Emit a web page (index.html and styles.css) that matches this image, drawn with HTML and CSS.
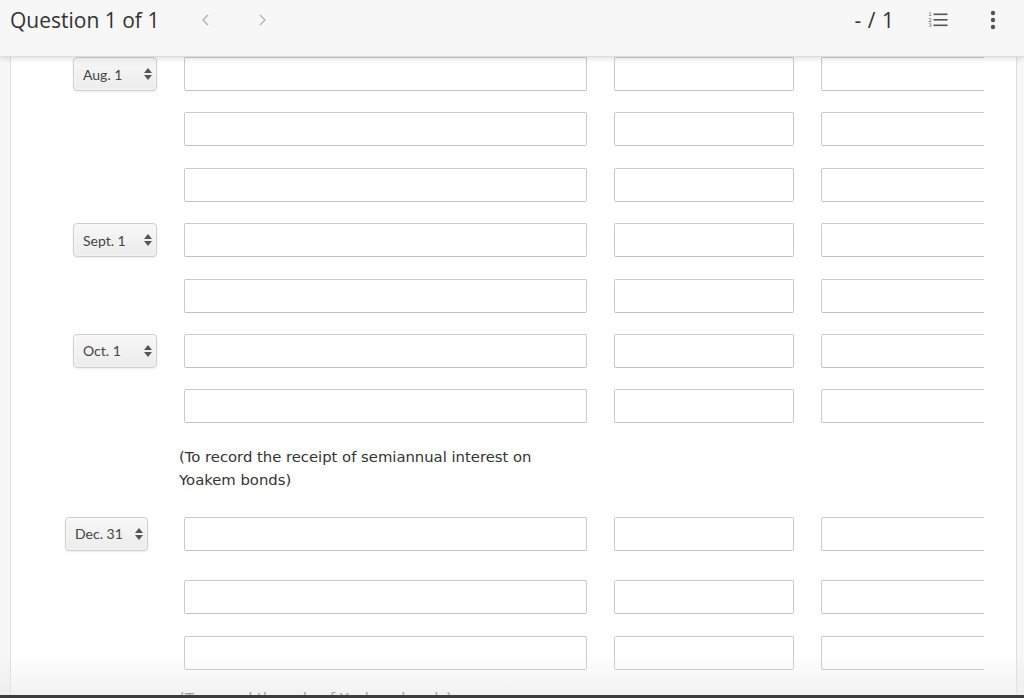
FILE: index.html
```html
<!DOCTYPE html>
<html>
<head>
    <title>Question 1 of 1</title>
    <link rel="stylesheet" href="styles.css">
</head>
<body>
    <header class="topbar">
        <div class="topbar-left">
            <span class="question-title">Question 1 of 1</span>
            <button class="nav-arrow" aria-label="Previous">
                <svg width="10" height="16" viewBox="0 0 10 16"><polyline points="7,3 2,8 7,13" fill="none" stroke="#b3b3b3" stroke-width="1.4"/></svg>
            </button>
            <button class="nav-arrow" aria-label="Next">
                <svg width="10" height="16" viewBox="0 0 10 16"><polyline points="3,3 8,8 3,13" fill="none" stroke="#b3b3b3" stroke-width="1.4"/></svg>
            </button>
        </div>
        <div class="topbar-right">
            <span class="score">- / 1</span>
            <button class="icon-btn" aria-label="Question list">
                <svg width="20" height="18" viewBox="0 0 20 18">
                    <text x="0.5" y="5" font-size="5" font-family="DejaVu Sans" fill="#555">1</text>
                    <text x="0.5" y="10.5" font-size="5" font-family="DejaVu Sans" fill="#555">2</text>
                    <text x="0.5" y="16" font-size="5" font-family="DejaVu Sans" fill="#555">3</text>
                    <rect x="5.5" y="2.5" width="14" height="1.6" fill="#555"/>
                    <rect x="5.5" y="8" width="14" height="1.6" fill="#555"/>
                    <rect x="5.5" y="13.5" width="14" height="1.6" fill="#555"/>
                </svg>
            </button>
            <button class="icon-btn" aria-label="More">
                <svg width="6" height="20" viewBox="0 0 6 20">
                    <circle cx="3" cy="3" r="2.2" fill="#555"/>
                    <circle cx="3" cy="10" r="2.2" fill="#555"/>
                    <circle cx="3" cy="17" r="2.2" fill="#555"/>
                </svg>
            </button>
        </div>
    </header>

    <main class="panel">
        <div class="sheet">
            <div class="entry-row">
                <div class="date-cell"><div class="date-select">Aug. 1<span class="updown"></span></div></div>
                <input class="field" type="text">
                <input class="field" type="text">
                <input class="field" type="text">
            </div>
            <div class="entry-row">
                <div class="date-cell"></div>
                <input class="field" type="text">
                <input class="field" type="text">
                <input class="field" type="text">
            </div>
            <div class="entry-row">
                <div class="date-cell"></div>
                <input class="field" type="text">
                <input class="field" type="text">
                <input class="field" type="text">
            </div>
            <div class="entry-row">
                <div class="date-cell"><div class="date-select">Sept. 1<span class="updown"></span></div></div>
                <input class="field" type="text">
                <input class="field" type="text">
                <input class="field" type="text">
            </div>
            <div class="entry-row">
                <div class="date-cell"></div>
                <input class="field" type="text">
                <input class="field" type="text">
                <input class="field" type="text">
            </div>
            <div class="entry-row">
                <div class="date-cell"><div class="date-select">Oct. 1<span class="updown"></span></div></div>
                <input class="field" type="text">
                <input class="field" type="text">
                <input class="field" type="text">
            </div>
            <div class="entry-row">
                <div class="date-cell"></div>
                <input class="field" type="text">
                <input class="field" type="text">
                <input class="field" type="text">
            </div>
            <div class="note-row">
                <p class="note">(To record the receipt of semiannual interest on Yoakem bonds)</p>
            </div>
            <div class="entry-row">
                <div class="date-cell"><div class="date-select date-select-wide">Dec. 31<span class="updown"></span></div></div>
                <input class="field" type="text">
                <input class="field" type="text">
                <input class="field" type="text">
            </div>
            <div class="entry-row entry-row-spaced">
                <div class="date-cell"></div>
                <input class="field" type="text">
                <input class="field" type="text">
                <input class="field" type="text">
            </div>
            <div class="entry-row">
                <div class="date-cell"></div>
                <input class="field" type="text">
                <input class="field" type="text">
                <input class="field" type="text">
            </div>
            <div class="note-row note-row-tight">
                <p class="note">(To record the sale of Yoakem bonds)</p>
            </div>
        </div>
    </main>

    <div class="bottom-fade"></div>
</body>
</html>
```

FILE: styles.css
```css
html, body {
    margin: 0;
    height: 698px;
    overflow: hidden;
}

body {
    display: flex;
    flex-direction: column;
    background: #f7f7f7;
    font-family: 'Lato', sans-serif;
}

button {
    background: none;
    border: none;
    padding: 0;
    cursor: pointer;
    display: flex;
    align-items: center;
}

.topbar {
    height: 57px;
    flex: none;
    display: flex;
    justify-content: space-between;
    align-items: flex-start;
    padding-top: 6px;
    background: #f7f7f7;
    border-bottom: 1px solid #dcdcdc;
    box-sizing: border-box;
    box-shadow: 0 2px 6px rgba(0, 0, 0, 0.12);
    position: relative;
    z-index: 2;
}

.topbar-left,
.topbar-right {
    display: flex;
    align-items: center;
    height: 28px;
}

.topbar-left {
    padding-left: 10px;
}

.question-title {
    font-family: 'Open Sans', sans-serif;
    font-size: 21px;
    color: #333;
    margin-right: 42px;
}

.nav-arrow {
    margin-right: 46px;
}

.topbar-right {
    padding-right: 28px;
}

.score {
    font-family: 'Open Sans', sans-serif;
    font-size: 21px;
    color: #333;
    margin-right: 34px;
    word-spacing: 1px;
}

.icon-btn + .icon-btn {
    margin-left: 42px;
}

.panel {
    flex: 1;
    margin: 0 7px 0 10px;
    background: #fff;
    border-left: 1px solid #dedede;
    border-right: 1px solid #dedede;
    overflow: hidden;
}

.sheet {
    width: 973px;
    overflow: hidden;
}

.entry-row {
    display: grid;
    grid-template-columns: 146px 403px 180px 180px;
    column-gap: 27px;
    height: 34px;
    margin-bottom: 21.4px;
}

.entry-row-spaced {
    margin-top: 29px;
    margin-bottom: 22px;
}

.date-cell {
    display: flex;
    align-items: stretch;
}

.date-select {
    margin-left: 62px;
    width: 84px;
    box-sizing: border-box;
    display: flex;
    align-items: center;
    justify-content: space-between;
    padding: 0 8px 0 9px;
    font-size: 14px;
    color: #444;
    border: 1px solid #cfcfcf;
    border-radius: 4px;
    background: linear-gradient(#f7f7f7, #ececec);
    box-shadow: inset 0 0 3px rgba(255, 255, 255, 0.9), 0 1px 2px rgba(0, 0, 0, 0.08);
}

.date-select-wide {
    margin-left: 54px;
    width: 83px;
}

.updown {
    width: 0;
    height: 12px;
    position: relative;
}

.updown::before,
.updown::after {
    content: "";
    position: absolute;
    left: -4px;
    border-left: 4px solid transparent;
    border-right: 4px solid transparent;
}

.updown::before {
    top: 0;
    border-bottom: 5px solid #555;
}

.updown::after {
    bottom: 0;
    border-top: 5px solid #555;
}

.field {
    margin: 0;
    height: 34px;
    box-sizing: border-box;
    border: 1px solid #cbcbcb;
    border-bottom-color: #c2c2c2;
    border-radius: 2px;
    background: #fff;
    font-size: 14px;
    padding: 0 8px;
}

.note-row {
    padding: 0 0 26px 168px;
}

.note-row-tight {
    margin-top: -5px;
}

.note {
    margin: 0;
    width: 362px;
    font-family: 'DejaVu Sans', sans-serif;
    font-size: 14.8px;
    line-height: 23px;
    color: #333;
}

.bottom-fade {
    position: fixed;
    left: 0;
    right: 0;
    bottom: 0;
    height: 40px;
    background: linear-gradient(rgba(240, 240, 240, 0), rgba(232, 232, 232, 0.6));
    border-bottom: 3px solid #3d3d3d;
    pointer-events: none;
    z-index: 3;
}
```
